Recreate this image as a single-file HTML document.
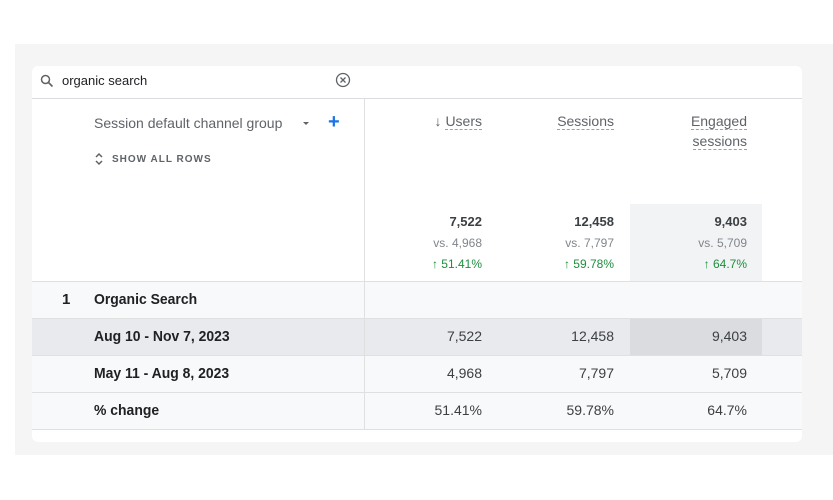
<!DOCTYPE html>
<html><head><meta charset="utf-8"><style>
*{margin:0;padding:0;box-sizing:border-box}
body{width:833px;height:500px;background:#fff;font-family:"Liberation Sans",sans-serif;position:relative;overflow:hidden;color:#3c4043}
.panel{position:absolute;left:15px;top:44px;width:818px;height:411px;background:#f5f5f5}
.card{position:absolute;left:32px;top:66px;width:770px;height:376px;background:#fff;border-radius:6px;overflow:hidden}
.a{position:absolute}
.hl{position:absolute;left:0;width:770px;height:1px;background:#e0e0e0}
.num{position:absolute;text-align:right;font-size:13px;color:#3c4043}
.hdr{position:absolute;text-align:right;font-size:14px;color:#5f6368;line-height:20px}
.hdr span{border-bottom:1px dashed #9aa0a6}
.sm{font-size:12px;color:#80868b}
.gr{font-size:12px;color:#1e8e3e}
.rl{position:absolute;left:62px;font-size:15px;color:#202124;font-weight:bold;transform:scaleX(0.93);transform-origin:left}
.nr{font-size:14px}
</style></head><body>
<div class="panel"></div>
<div class="card">
  <svg class="a" style="left:8px;top:8px" width="14" height="14" viewBox="0 0 14 14"><circle cx="5.5" cy="5.5" r="4" fill="none" stroke="#5f6368" stroke-width="1.5"/><path d="M8.5 8.5L12.5 12.5" stroke="#5f6368" stroke-width="1.6"/></svg>
  <div class="a" style="left:30px;top:7px;font-size:13px;color:#202124">organic search</div>
  <svg class="a" style="left:303px;top:6px" width="16" height="16" viewBox="0 0 16 16"><circle cx="8" cy="8" r="6.5" fill="none" stroke="#5f6368" stroke-width="1.3"/><path d="M5.5 5.5L10.5 10.5M10.5 5.5L5.5 10.5" stroke="#5f6368" stroke-width="1.3"/></svg>
  <div class="hl" style="top:32px;background:#dadce0"></div>
  <div class="a" style="left:332px;top:33px;width:1px;height:330px;background:#e0e0e0"></div>
  <div class="a" style="left:62px;top:49px;font-size:14px;color:#5f6368">Session default channel group</div>
  <div class="a" style="left:271px;top:56px;width:0;height:0;border-left:3px solid transparent;border-right:3px solid transparent;border-top:3px solid #5f6368"></div>
  <div class="a" style="left:296px;top:45px;font-size:20px;color:#1a73e8;font-weight:bold">+</div>
  <svg class="a" style="left:62px;top:86px" width="10" height="14" viewBox="0 0 10 14"><path d="M2 5L5 2L8 5M2 9L5 12L8 9" fill="none" stroke="#5f6368" stroke-width="1.5"/></svg>
  <div class="a" style="left:80px;top:88px;font-size:10px;font-weight:bold;letter-spacing:1px;color:#5f6368">SHOW ALL ROWS</div>
  <div class="hdr" style="right:320px;top:45px"><span style="border:none">↓</span> <span>Users</span></div>
  <div class="hdr" style="right:188px;top:45px"><span>Sessions</span></div>
  <div class="hdr" style="right:55px;top:45px"><span>Engaged</span><br><span>sessions</span></div>
  <div class="a" style="left:598px;top:138px;width:132px;height:77px;background:#f1f3f4"></div>
  <div class="num" style="right:320px;top:148px;font-weight:bold">7,522</div>
  <div class="num sm" style="right:320px;top:170px">vs. 4,968</div>
  <div class="num gr" style="right:320px;top:191px">↑ 51.41%</div>
  <div class="num" style="right:188px;top:148px;font-weight:bold">12,458</div>
  <div class="num sm" style="right:188px;top:170px">vs. 7,797</div>
  <div class="num gr" style="right:188px;top:191px">↑ 59.78%</div>
  <div class="num" style="right:55px;top:148px;font-weight:bold">9,403</div>
  <div class="num sm" style="right:55px;top:170px">vs. 5,709</div>
  <div class="num gr" style="right:55px;top:191px">↑ 64.7%</div>
  <div class="a" style="left:0;top:215px;width:770px;height:148px;background:#f8f9fa"></div>
  <div class="a" style="left:0;top:252px;width:770px;height:37px;background:#e8eaed"></div>
  <div class="a" style="left:598px;top:252px;width:132px;height:37px;background:#dadce0"></div>
  <div class="a" style="left:332px;top:215px;width:1px;height:148px;background:#e0e0e0"></div>
  <div class="hl" style="top:215px"></div>
  <div class="hl" style="top:252px"></div>
  <div class="hl" style="top:289px"></div>
  <div class="hl" style="top:326px"></div>
  <div class="hl" style="top:363px"></div>
  <div class="a" style="left:30px;top:225px;font-size:15px;color:#202124;font-weight:bold">1</div>
  <div class="rl" style="top:225px">Organic Search</div>
  <div class="rl" style="top:262px">Aug 10 - Nov 7, 2023</div>
  <div class="rl" style="top:299px">May 11 - Aug 8, 2023</div>
  <div class="rl" style="top:336px">% change</div>
  <div class="num nr" style="right:320px;top:262px">7,522</div>
  <div class="num nr" style="right:188px;top:262px">12,458</div>
  <div class="num nr" style="right:55px;top:262px">9,403</div>
  <div class="num nr" style="right:320px;top:299px">4,968</div>
  <div class="num nr" style="right:188px;top:299px">7,797</div>
  <div class="num nr" style="right:55px;top:299px">5,709</div>
  <div class="num nr" style="right:320px;top:336px">51.41%</div>
  <div class="num nr" style="right:188px;top:336px">59.78%</div>
  <div class="num nr" style="right:55px;top:336px">64.7%</div>
</div>
</body></html>
